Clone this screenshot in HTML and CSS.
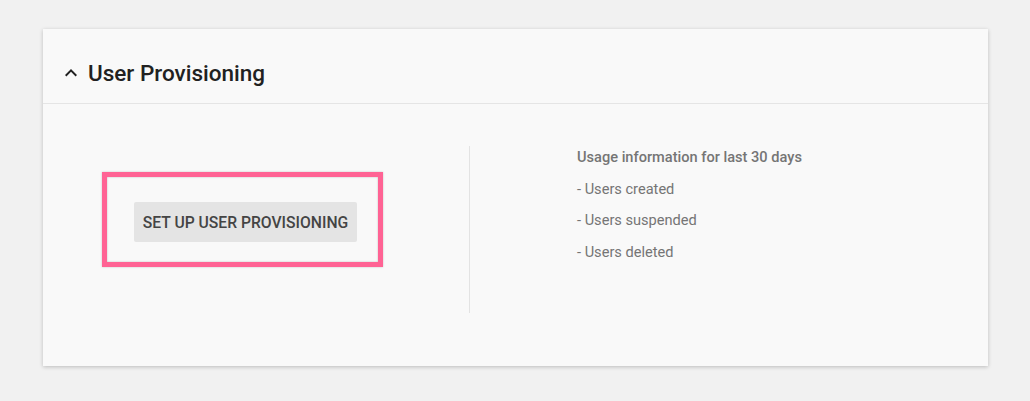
FILE: index.html
```html
<!DOCTYPE html>
<html>
  <head>
    <title>User Provisioning</title>
    <meta name="viewport" content="width=device-width, initial-scale=1">
    <link rel="stylesheet" href="styles.css">
  </head>
  <body>
    <div class="card">
      <div class="card-header">
        <svg class="chevron" width="24" height="24" viewBox="0 0 24 24"><path d="M12 8l-6 6 1.41 1.41L12 10.83l4.59 4.58L18 14z" fill="#212121"/></svg>
        <h2>User Provisioning</h2>
      </div>
      <div class="card-body">
        <div class="setup-col">
          <div class="highlight">
            <button class="setup-btn">SET UP USER PROVISIONING</button>
          </div>
        </div>
        <div class="divider"></div>
        <div class="usage-col">
          <div class="usage-title">Usage information for last 30 days</div>
          <div class="usage-item">- Users created</div>
          <div class="usage-item">- Users suspended</div>
          <div class="usage-item">- Users deleted</div>
        </div>
      </div>
    </div>
  </body>
</html>
```
FILE: styles.css
```css
html {font-family: Roboto, "Liberation Sans", sans-serif;}
body {margin: 0; background-color: #f1f1f1; padding: 29px 42px 34px 43px;}
.card {background: #f9f9f9; box-shadow: 0 1px 4px rgba(0, 0, 0, 0.22); width: 945px;}
.card-header {display: flex; align-items: center; padding: 30px 16px 16px 16px; height: 28px; border-bottom: 1px solid #e5e5e5;}
.chevron {flex: none; margin-right: 5px;}
.card-header h2 {margin: 0; font-size: 22.5px; font-weight: 500; line-height: 28px; color: #212121;}
.card-body {display: flex; padding: 36px 0 53px 0;}
.setup-col {width: 367px; padding-left: 59px; display: flex; align-items: flex-start; padding-top: 32px;}
.highlight {border: 5px solid #ff6394; padding: 25px 21px 20px 27px; box-shadow: inset 0 0 2px rgba(0, 0, 0, 0.25), 0 0 2px rgba(0, 0, 0, 0.2);}
.setup-btn {display: block; width: 223px; height: 40px; padding: 0; border: 0; border-radius: 2px; background: #e4e4e4; color: #444; font-family: inherit; font-size: 15.7px; font-weight: 500; cursor: pointer;}
.divider {width: 1px; height: 167px; margin-top: 6px; background: #e3e3e3;}
.usage-col {padding-left: 107px; padding-top: 2px; color: #757575; font-size: 14.6px; line-height: 31.5px;}
.usage-title {font-weight: 500;}
```
